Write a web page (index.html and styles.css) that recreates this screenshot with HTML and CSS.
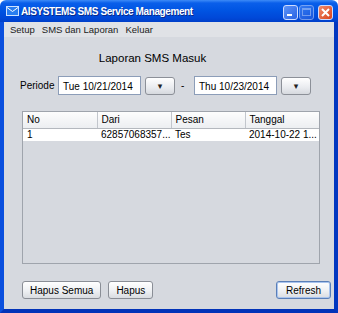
FILE: index.html
```html
<!doctype html>
<html>
<head>
	<meta charset="utf-8">
	<title>AISYSTEMS SMS Service Management</title>
	<link rel="stylesheet" href="styles.css">
</head>
<body>
	<div class="window">
		<div class="titlebar">
			<svg class="app-icon" width="13" height="10" viewBox="0 0 13 10">
				<rect x="0.5" y="0.5" width="12" height="9" fill="#2a7ef0" stroke="#cfe3ff"/>
				<path d="M1 1.5 L6.5 5.5 L12 1.5" fill="none" stroke="#ffffff" stroke-width="1"/>
			</svg>
			<span class="title">AISYSTEMS SMS Service Management</span>
			<div class="ctrls">
				<span class="ctrl min"><i></i></span>
				<span class="ctrl max"><i></i></span>
				<span class="ctrl close">
					<svg width="9" height="9" viewBox="0 0 9 9"><path d="M1 1 L8 8 M8 1 L1 8" stroke="#fff" stroke-width="2"/></svg>
				</span>
			</div>
		</div>
		<div class="frame">
			<div class="menubar">
				<span>Setup</span>
				<span>SMS dan Laporan</span>
				<span>Keluar</span>
			</div>
			<div class="content">
				<div class="heading">Laporan SMS Masuk</div>
				<div class="period">
					<span class="label">Periode</span>
					<div class="field">Tue 10/21/2014</div>
					<button class="drop">▾</button>
					<span class="dash">-</span>
					<div class="field">Thu 10/23/2014</div>
					<button class="drop">▾</button>
				</div>
				<div class="table-wrap">
					<table class="grid">
						<thead>
							<tr><th>No</th><th>Dari</th><th>Pesan</th><th>Tanggal</th></tr>
						</thead>
						<tbody>
							<tr><td>1</td><td>62857068357...</td><td>Tes</td><td>2014-10-22 1...</td></tr>
						</tbody>
					</table>
				</div>
				<div class="actions">
					<button class="btn">Hapus Semua</button>
					<button class="btn">Hapus</button>
					<button class="btn default">Refresh</button>
				</div>
			</div>
		</div>
	</div>
</body>
</html>
```
FILE: styles.css
```css
*{
	margin:0;
	padding:0;
	box-sizing:border-box;
}
body{
	width:338px;
	height:313px;
	font-family:"Liberation Sans",Arial,sans-serif;
	font-size:10px;
	color:#000;
	background:#fff;
}
.window{
	display:flex;
	flex-direction:column;
	width:338px;
	height:313px;
}
.titlebar{
	display:flex;
	align-items:center;
	height:22px;
	padding:0 5px 0 6px;
	border-radius:6px 6px 0 0;
	background:linear-gradient(#3d8bf7 0,#0a5fea 3px,#0055e3 10px,#0048d8 18px,#003fc9 22px);
}
.app-icon{
	flex:none;
	margin-right:2px;
}
.title{
	flex:1;
	color:#fff;
	font-weight:bold;
	font-size:10px;
	letter-spacing:-0.4px;
	text-shadow:1px 1px 0 #0a2a8a;
}
.ctrls{
	display:flex;
	gap:1px;
	margin-top:2px;
}
.ctrl{
	display:flex;
	align-items:center;
	justify-content:center;
	width:15px;
	height:15px;
	border:1px solid #cfdcff;
	border-radius:3px;
	background:linear-gradient(135deg,#5d93f7,#2a63e4);
}
.ctrl.min i{
	width:5px;
	height:2px;
	margin-top:6px;
	margin-right:3px;
	background:#fff;
}
.ctrl.max{
	opacity:0.55;
}
.ctrl.max i{
	width:9px;
	height:8px;
	border:1px solid #cfdcff;
	border-top-width:2px;
}
.ctrl.close{
	margin-left:3px;
	background:linear-gradient(135deg,#f08a6a,#d8431c);
}
.frame{
	flex:1;
	display:flex;
	flex-direction:column;
	border:4px solid #0647d4;
	border-top:none;
	border-left-color:#0a4fde;
	border-right-color:#0237c0;
	border-bottom-color:#0233b8;
	background:#d6d9df;
}
.menubar{
	display:flex;
	gap:7px;
	height:15px;
	padding:2px 0 0 6px;
	background:#e0e2e6;
	color:#222;
	font-size:9.5px;
}
.content{
	flex:1;
	display:flex;
	flex-direction:column;
	padding:0 3px 5px 18px;
}
.heading{
	margin:15px 33px 0 -15px;
	text-align:center;
	font-size:11.5px;
}
.period{
	display:flex;
	align-items:center;
	height:19px;
	margin:12px 0 0 -2px;
}
.label{
	width:38px;
}
.field{
	width:83px;
	height:19px;
	padding:4px 0 0 4px;
	background:#fff;
	border:1px solid #8c9db8;
	white-space:nowrap;
}
.drop{
	width:30px;
	height:18px;
	margin-left:4px;
	border:1px solid #8c9098;
	border-radius:3px;
	background:linear-gradient(#ffffff,#e9ebef 60%,#d6d9de);
	font-size:9px;
	font-family:"DejaVu Sans",sans-serif;
	color:#222;
}
.dash{
	width:19px;
	padding-left:6px;
}
.table-wrap{
	width:298px;
	height:153px;
	margin-top:16px;
	border:1px solid #9fa4ac;
	background:#d6d9df;
}
.grid{
	width:100%;
	border-collapse:collapse;
	table-layout:fixed;
}
.grid th{
	height:16px;
	padding:0 4px;
	font-weight:normal;
	text-align:left;
	background:linear-gradient(#fdfdfd,#eceef1);
	border-right:1px solid #c2c6cc;
	border-bottom:1px solid #b4b8be;
}
.grid th:last-child{
	border-right:none;
}
.grid td{
	height:12px;
	padding:0 4px;
	background:#fff;
	line-height:12px;
	white-space:nowrap;
	overflow:hidden;
}
.actions{
	display:flex;
	gap:7px;
	margin-top:17px;
}
.btn{
	height:18px;
	padding:0 7px;
	border:1px solid #8a8e96;
	border-radius:3px;
	background:linear-gradient(#ffffff,#eef0f3 55%,#d9dce1);
	font-family:"Liberation Sans",Arial,sans-serif;
	font-size:10px;
	color:#000;
}
.btn.default{
	margin-left:auto;
	padding:0 9px;
	border-color:#5a7fb8;
	box-shadow:inset 0 0 0 1px #a9c4ee;
}
```
